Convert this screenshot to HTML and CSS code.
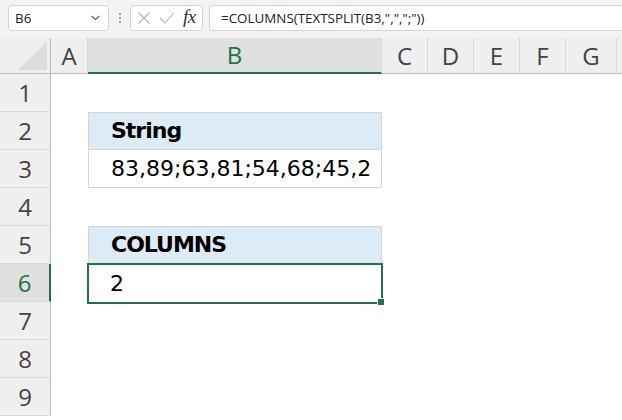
FILE: index.html
```html
<!DOCTYPE html>
<html>
<head>
<meta charset="utf-8">
<link rel="stylesheet" href="styles.css">
</head>
<body>
<div class="app">
  <div class="toolbar">
    <div class="namebox">
      <span class="name">B6</span>
      <svg class="chev" width="9" height="6" viewBox="0 0 9 6"><path d="M0.8 1 L4.5 4.6 L8.2 1" fill="none" stroke="#555" stroke-width="1.1"/></svg>
    </div>
    <div class="dots"><span></span><span></span><span></span></div>
    <div class="fxbox">
      <svg class="ico" width="14" height="14" viewBox="0 0 14 14"><path d="M1.5 1.5 L12.5 12.5 M12.5 1.5 L1.5 12.5" stroke="#b4b4b4" stroke-width="1.1" fill="none"/></svg>
      <svg class="ico" width="16" height="14" viewBox="0 0 16 14"><path d="M1 7 L6 12 L15 1.5" stroke="#b4b4b4" stroke-width="1.1" fill="none"/></svg>
      <span class="fx">fx</span>
    </div>
    <div class="formula">=COLUMNS(TEXTSPLIT(B3,",",";"))</div>
  </div>
  <div class="sheet">
    <div class="corner"><div class="tri"></div></div>
    <div class="colhead">A</div>
    <div class="colhead sel">B</div>
    <div class="colhead">C</div>
    <div class="colhead">D</div>
    <div class="colhead">E</div>
    <div class="colhead">F</div>
    <div class="colhead">G</div>
    <div class="colhead last"></div>

    <div class="rowhead r1">1</div>
    <div class="rowhead r2">2</div>
    <div class="rowhead r3">3</div>
    <div class="rowhead r4">4</div>
    <div class="rowhead r5">5</div>
    <div class="rowhead r6 sel">6</div>
    <div class="rowhead r7">7</div>
    <div class="rowhead r8">8</div>
    <div class="rowhead r9">9</div>

    <div class="cell head r2">String</div>
    <div class="cell body r3">83,89;63,81;54,68;45,2</div>
    <div class="cell head r5">COLUMNS</div>
    <div class="cell active r6">2</div>
  </div>
</div>
</body>
</html>
```

FILE: styles.css
```css
html, body {
  margin: 0;
  padding: 0;
  background: #ffffff;
}
.app {
  width: 622px;
  height: 420px;
  overflow: hidden;
  background: #ffffff;
}
.toolbar {
  height: 38px;
  box-sizing: border-box;
  background: #f3f3f3;
  display: flex;
  align-items: flex-start;
  padding-top: 5px;
  font-family: "Open Sans", "Noto Sans", sans-serif;
  font-size: 13.4px;
  color: #222;
}
.namebox {
  margin-left: 8px;
  width: 101px;
  height: 26px;
  box-sizing: border-box;
  background: #fff;
  border: 1px solid #d4d4d4;
  border-radius: 4px;
  display: flex;
  align-items: center;
  justify-content: space-between;
  padding: 0 8px 0 6px;
}
.name {
  line-height: 24px;
}
.dots {
  width: 21px;
  height: 26px;
  display: flex;
  flex-direction: column;
  align-items: center;
  justify-content: center;
  gap: 2px;
}
.dots span {
  width: 2px;
  height: 2px;
  background: #8a8a8a;
  border-radius: 1px;
}
.fxbox {
  width: 73px;
  height: 26px;
  box-sizing: border-box;
  background: #fff;
  border: 1px solid #d4d4d4;
  border-radius: 4px;
  display: flex;
  align-items: center;
  padding-left: 6px;
  gap: 8px;
}
.fx {
  font-family: "Liberation Serif", "DejaVu Serif", serif;
  font-style: italic;
  font-size: 19px;
  line-height: 22px;
  color: #333;
  letter-spacing: -0.5px;
  margin-top: -2px;
}
.formula {
  margin-left: 6px;
  flex: 1;
  height: 26px;
  box-sizing: border-box;
  background: #fff;
  border: 1px solid #d4d4d4;
  border-right: none;
  border-radius: 4px 0 0 4px;
  padding-left: 11px;
  line-height: 24px;
}
.sheet {
  display: grid;
  grid-template-columns: 51px 37px 294px 46px 46px 46px 46px 51px 5px;
  grid-template-rows: 36px repeat(9, 38px);
  font-family: "Open Sans", "Noto Sans", sans-serif;
}
.corner {
  grid-column: 1;
  grid-row: 1;
  background: #efefef;
  border-right: 1px solid #bdbdbd;
  border-bottom: 1px solid #bdbdbd;
  box-sizing: border-box;
  position: relative;
}
.tri {
  position: absolute;
  right: 3px;
  bottom: 3px;
  width: 0;
  height: 0;
  border-left: 29px solid transparent;
  border-bottom: 28px solid #dcdcdc;
}
.colhead {
  grid-row: 1;
  background: #efefef;
  border-right: 1px solid #d8d8d8;
  border-bottom: 1px solid #bdbdbd;
  box-sizing: border-box;
  text-align: center;
  font-size: 24px;
  line-height: 35px;
  color: #444;
}
.colhead.sel {
  background: #e0e0e0;
  color: #217346;
  border-bottom: 2px solid #217346;
  line-height: 34px;
}
.colhead.last {
  border-right: none;
}
.rowhead {
  grid-column: 1;
  background: #efefef;
  border-right: 1px solid #bdbdbd;
  border-bottom: 1px solid #d8d8d8;
  box-sizing: border-box;
  text-align: center;
  font-size: 24px;
  line-height: 37px;
  color: #444;
}
.rowhead.sel {
  background: #e0e0e0;
  color: #217346;
  border-right: 2px solid #217346;
}
.r1 { grid-row: 2; }
.r2 { grid-row: 3; }
.r3 { grid-row: 4; }
.r4 { grid-row: 5; }
.r5 { grid-row: 6; }
.r6 { grid-row: 7; }
.r7 { grid-row: 8; }
.r8 { grid-row: 9; }
.r9 { grid-row: 10; }
.cell {
  grid-column: 3;
  box-sizing: border-box;
  font-family: "DejaVu Sans", "Open Sans", sans-serif;
  font-size: 22px;
  line-height: 36px;
  padding-left: 22px;
  color: #000;
  white-space: nowrap;
}
.cell.head {
  background: #ddebf7;
  border: 1px solid #d6d6d6;
  font-weight: bold;
  letter-spacing: -1px;
}
.cell.body {
  background: #fff;
  border: 1px solid #d6d6d6;
  border-top: none;
  line-height: 37px;
}
.cell.active {
  margin: -1px -1px -2px -1px;
  border: 2px solid #217346;
  padding-left: 21px;
  position: relative;
  line-height: 37px;
}
.cell.active::after {
  content: "";
  position: absolute;
  right: -3px;
  bottom: -3px;
  width: 6px;
  height: 6px;
  background: #217346;
  border-left: 1px solid #fff;
  border-top: 1px solid #fff;
}
```
